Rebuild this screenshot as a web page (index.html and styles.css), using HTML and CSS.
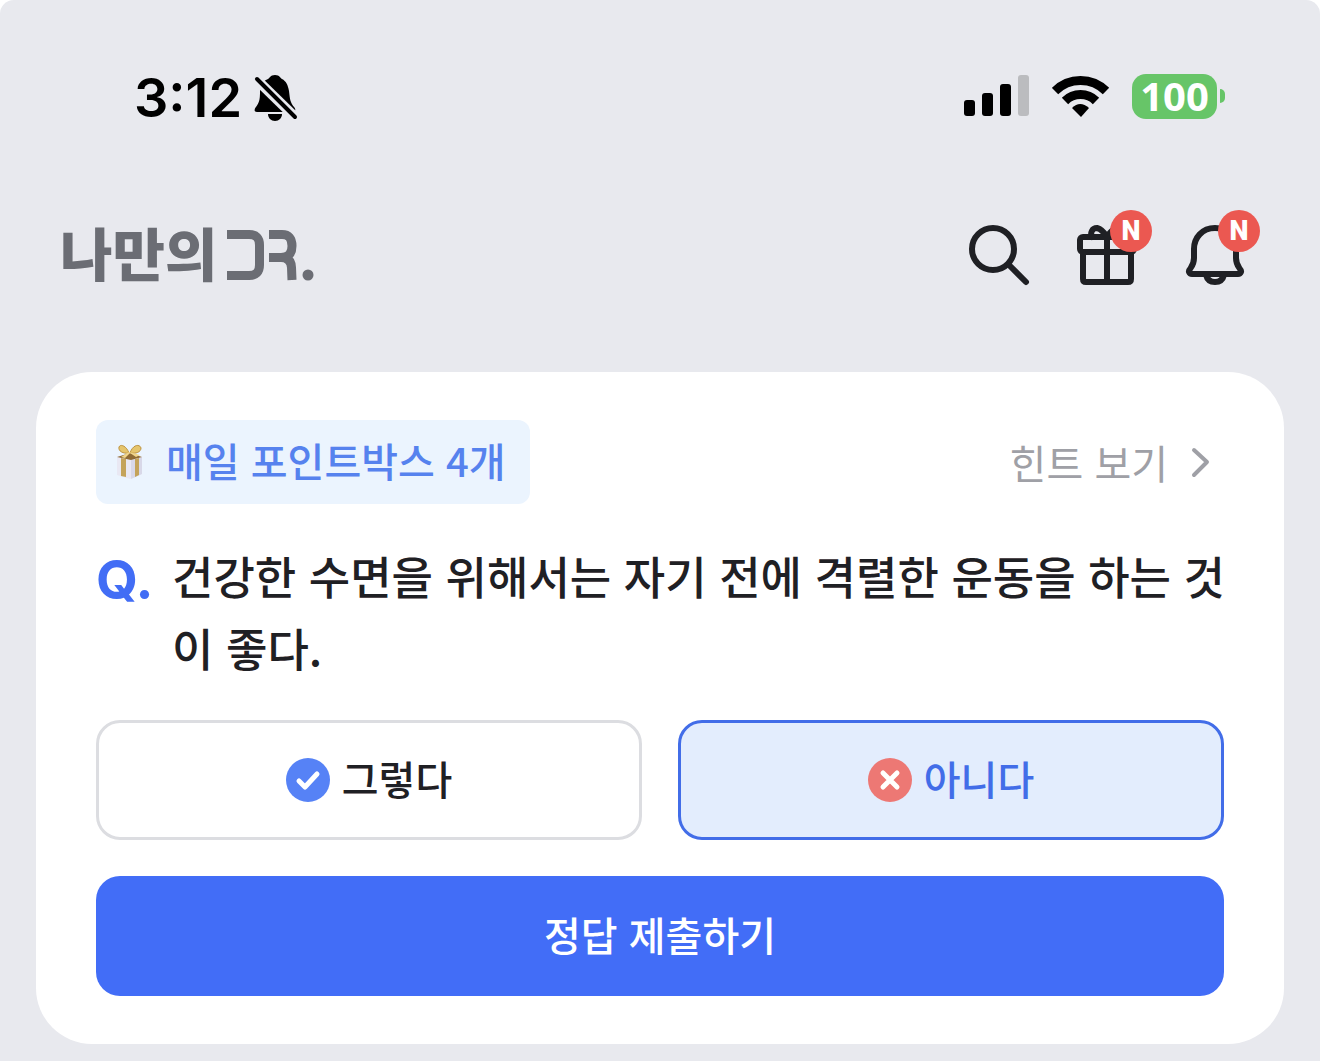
FILE: index.html
```html
<!DOCTYPE html>
<html lang="ko">
<head>
    <meta charset="UTF-8">
    <meta name="viewport" content="width=device-width, initial-scale=1.0">
    <title>나만의 DR.</title>
    <link rel="stylesheet" href="styles.css">
</head>
<body>

    <!-- Status Bar -->
    <div class="status-bar">
        <div class="status-left">
            <span class="time">3:12</span>
            <svg width="44" height="46" viewBox="0 0 44 46" aria-hidden="true">
                <path d="M21 0c-5 0-5 3-7 4C8 6 6 11 6 17c0 8-1 11-4 15-2 2-2 5 1 5h35c4 0 4-3 2-5-4-5-4-8-5-16C34 10 32 6 28 4c-2-1-2-4-7-4z"/>
                <path d="M14 39h14c0 4-3 7-7 7s-7-3-7-7z"/>
                <path class="slash-gap" d="M1 3l41 40"/>
                <path class="slash" d="M3 4l38 38"/>
            </svg>
        </div>
        <div class="status-right">
            <svg width="66" height="42" viewBox="0 0 66 42" aria-hidden="true">
                <rect x="0" y="25" width="11" height="16" rx="3"/>
                <rect x="18" y="18" width="11" height="23" rx="3"/>
                <rect x="36" y="9" width="11" height="32" rx="3"/>
                <rect x="54" y="0" width="11" height="41" rx="3" fill="#bbbcbf"/>
            </svg>
            <svg width="58" height="42" viewBox="0 0 58 42" aria-hidden="true">
                <g fill="none" stroke="#000" stroke-width="9">
                    <path d="M3 16A36 36 0 0 1 54 16"/>
                    <path d="M13 26A22 22 0 0 1 44 26"/>
                </g>
                <path d="M20 33Q28 25 37 33L29 42z"/>
            </svg>
            <div class="battery"><span class="battery-level">100</span></div>
        </div>
    </div>

    <header class="header">
        <a class="logo" href="#" aria-label="나만의 DR.">
            <span>나만의</span>
            <svg width="88" height="52" viewBox="0 0 88 52" aria-hidden="true">
                <g fill="none" stroke="#6b6d74" stroke-width="9">
                    <path d="M0 5.500h22q10.500 0 10.500 10.500v20q0 10.500-10.500 10.500H0"/>
                    <path d="M42 5.500h13q10 0 10 11.500t-11 11.500H42M54 28.500q10 0 10.500 10l.5 12.500"/>
                </g>
                <circle cx="81" cy="46" r="5.500" fill="#6b6d74"/>
            </svg>
        </a>
        <nav class="header-icons">
            <button class="icon-btn" type="button" aria-label="검색">
                <svg width="72" height="72" viewBox="0 0 72 72" aria-hidden="true">
                    <circle cx="30" cy="30" r="21"/>
                    <path d="M46 46l17 17"/>
                </svg>
            </button>
            <button class="icon-btn" type="button" aria-label="선물">
                <svg width="72" height="72" viewBox="0 0 72 72" aria-hidden="true">
                    <rect x="9" y="18" width="54" height="15" rx="3"/>
                    <path d="M12 33v27q0 3 3 3h42q3 0 3-3V33M36 18v45M36 18c-3-5-6-8-10-9-5 0-7 5-5 9M36 18c3-5 6-8 10-9 5 0 7 5 5 9"/>
                </svg>
                <span class="badge">N</span>
            </button>
            <button class="icon-btn" type="button" aria-label="알림">
                <svg width="72" height="72" viewBox="0 0 72 72" aria-hidden="true">
                    <path d="M36 9c-13 0-21 10-21 21v9c0 6-2 8-4 11-2 2-1 5 2 5h46c3 0 4-3 2-5-2-3-4-5-4-11v-9c0-11-8-21-21-21z"/>
                    <path d="M27 56c1 4 4 7 9 7s8-3 9-7"/>
                </svg>
                <span class="badge">N</span>
            </button>
        </nav>
    </header>

    <main>
        <form class="card">
            <div class="card-top">
                <div class="point-box">
                    <svg width="28" height="36" viewBox="0 0 28 36" aria-hidden="true">
                        <path d="M1 13l13-4 12 4v17l-12 5L1 31z" fill="#e9e8f3"/>
                        <path d="M15 16l11-3v17l-11 5z" fill="#d8d8e8"/>
                        <path d="M1 13l13-4 12 4-11 3z" fill="#8f6b35"/>
                        <path d="M5 14l5 1v18l-5-1zM19 15l4-1v17l-4 2z" fill="#c4a35a"/>
                        <path d="M13 9C10 1 4 0 3 3c-1 4 4 7 10 6zM14 9c3-9 10-9 11-5 0 4-5 6-11 5z" fill="#e5c56d" stroke="#bd923d"/>
                        <path d="M13 8l-8 5 4 1 5-5 6 4 4-2z" fill="#f0d58b"/>
                    </svg>
                    <span>매일 포인트박스 4개</span>
                </div>
                <a class="hint" href="#">
                    힌트 보기
                    <svg width="48" height="48" viewBox="0 0 48 48" aria-hidden="true">
                        <path d="M18 12l13 12-13 13"/>
                    </svg>
                </a>
            </div>

            <div class="question">
                <span class="q-mark">Q.</span>
                <p id="question-text">건강한 수면을 위해서는 자기 전에 격렬한 운동을 하는 것이 좋다.</p>
            </div>

            <div class="options" role="radiogroup" aria-labelledby="question-text">
                <label class="option">
                    <input type="radio" name="answer" value="yes">
                    <svg width="44" height="44" viewBox="0 0 44 44" aria-hidden="true">
                        <circle cx="22" cy="22" r="22" fill="#5682f6"/>
                        <path d="M13 23l6 6 12-13"/>
                    </svg>
                    <span>그렇다</span>
                </label>
                <label class="option">
                    <input type="radio" name="answer" value="no" checked>
                    <svg width="44" height="44" viewBox="0 0 44 44" aria-hidden="true">
                        <circle cx="22" cy="22" r="22" fill="#ed7874"/>
                        <path d="M15 15l14 14M29 15L15 29"/>
                    </svg>
                    <span>아니다</span>
                </label>
            </div>

            <button class="submit-btn" type="button">정답 제출하기</button>
        </form>
    </main>

</body>
</html>
```
FILE: styles.css
```css
* {
    box-sizing: border-box;
}

html {
    background-color: white;
}

body {
    margin: 0;
    min-height: 100vh;
    border-radius: 14px 14px 0 0;
    background-color: #e8e9ee;
    color: #1f2024;
    font-family: "Noto Sans CJK KR", sans-serif;
    font-size: 40px;
    font-weight: 500;
}

svg {
    display: block;
    flex: none;
}

button {
    border: none;
    font: inherit;
    cursor: pointer;
}

/* Status Bar */
.status-bar {
    display: flex;
    justify-content: space-between;
    align-items: center;
    height: 196px;
    padding: 0 95px 0 134px;
    color: black;
}

.status-left {
    display: flex;
    align-items: center;
    gap: 12px;
}

.time {
    font-family: Inter, sans-serif;
    font-size: 54px;
    font-weight: 600;
    line-height: 56px;
}

.slash-gap {
    stroke: #e8e9ee;
    stroke-width: 10;
}

.slash {
    stroke: black;
    stroke-width: 4;
    stroke-linecap: round;
}

.status-right {
    display: flex;
    align-items: center;
    gap: 22px;
    padding-bottom: 4px;
}

.battery {
    display: flex;
    align-items: center;
    gap: 3px;
}

.battery-level {
    width: 85px;
    height: 45px;
    border-radius: 14px;
    background-color: #67c568;
    color: white;
    font-family: "Noto Sans", sans-serif;
    font-size: 40px;
    font-weight: 700;
    line-height: 43px;
    text-align: center;
}

.battery::after {
    content: "";
    width: 5px;
    height: 14px;
    border-radius: 0 6px 6px 0;
    background-color: #67c568;
}

/* Header */
.header {
    display: flex;
    justify-content: space-between;
    align-items: center;
    height: 176px;
    padding: 0 69px 58px 60px;
}

.logo {
    display: flex;
    align-items: center;
    gap: 10px;
    color: #6b6d74;
    font-size: 57px;
    font-weight: 900;
    line-height: 72px;
    text-decoration: none;
}

.logo span {
    padding-bottom: 8px;
}

.header-icons {
    display: flex;
    gap: 36px;
}

.icon-btn {
    position: relative;
    padding: 0;
    background: none;
}

.icon-btn svg {
    fill: none;
    stroke: #1f2024;
    stroke-width: 6;
    stroke-linecap: round;
    stroke-linejoin: round;
}

.badge {
    position: absolute;
    top: -9px;
    right: -9px;
    width: 42px;
    height: 42px;
    border-radius: 50%;
    background-color: #eb5851;
    color: white;
    font-family: Roboto, sans-serif;
    font-size: 27px;
    font-weight: 900;
    line-height: 42px;
    text-align: center;
}

/* Quiz Card */
.card {
    display: flex;
    flex-direction: column;
    gap: 36px;
    margin: 0 36px;
    padding: 48px 60px;
    border-radius: 56px;
    background-color: white;
}

.card-top {
    display: flex;
    justify-content: space-between;
    align-items: center;
}

.point-box {
    display: flex;
    align-items: center;
    gap: 22px;
    padding: 0 24px 0 20px;
    border-radius: 12px;
    background-color: #ebf4fe;
    color: #5682ee;
    line-height: 84px;
}

.point-box span,
.hint {
    height: 84px;
    line-height: 80px;
}

.hint {
    display: flex;
    align-items: center;
    gap: 8px;
    color: #9fa0a6;
    font-weight: 400;
    text-decoration: none;
}

.hint path {
    fill: none;
    stroke: #9fa0a6;
    stroke-width: 4;
    stroke-linecap: round;
    stroke-linejoin: round;
}

.question {
    display: flex;
    margin-right: -12px;
    font-size: 45px;
    line-height: 72px;
}

.question p {
    flex: 1;
    margin: 0;
    word-break: break-all;
}

.q-mark {
    width: 76px;
    height: 72px;
    color: #426df5;
    font-family: Inter, sans-serif;
    font-size: 54px;
    font-weight: 700;
    line-height: 80px;
}

.options {
    display: grid;
    grid-template-columns: 1fr 1fr;
    gap: 36px;
}

.option {
    position: relative;
    display: flex;
    justify-content: center;
    align-items: center;
    gap: 12px;
    height: 120px;
    border: 3px solid #dcdde1;
    border-radius: 24px;
    cursor: pointer;
}

.option:has(input:checked) {
    border-color: #426de8;
    background-color: #e3edfd;
    color: #426de8;
}

.option span {
    padding-bottom: 4px;
}

.option input {
    position: absolute;
    inset: 0;
    margin: 0;
    opacity: 0;
    cursor: pointer;
}

.option path {
    fill: none;
    stroke: white;
    stroke-width: 5;
    stroke-linecap: round;
    stroke-linejoin: round;
}

.submit-btn {
    height: 120px;
    padding: 0 0 4px;
    border-radius: 24px;
    background-color: #426df7;
    color: white;
}
```
